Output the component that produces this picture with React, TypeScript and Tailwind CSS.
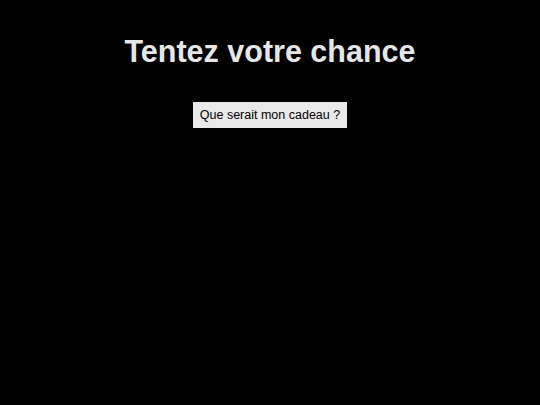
export default function App() {
  return (
    <div className="min-h-[405px] bg-black flex flex-col items-center" style={{ fontFamily: '"Liberation Sans", Arial, sans-serif' }}>
      <h1 className="mt-[33px] text-[30.5px] leading-[37px] font-bold text-[#e6e6e6]">Tentez votre chance</h1>
      <button className="mt-[32px] bg-[#e9e9e9] text-black text-[12.5px] leading-[16px] px-[7px] py-[5px]">Que serait mon cadeau ?</button>
    </div>
  );
}
